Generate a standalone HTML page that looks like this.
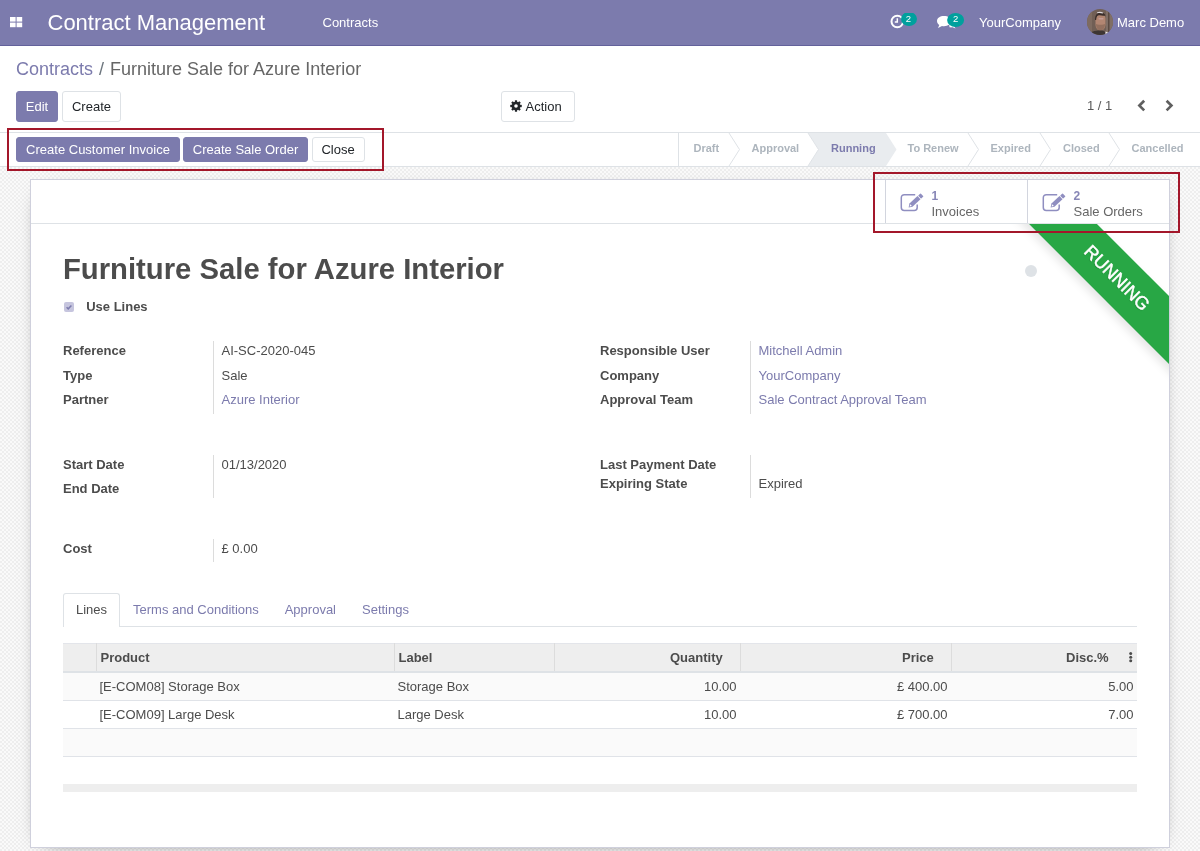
<!DOCTYPE html>
<html><head><meta charset="utf-8">
<style>
*{box-sizing:border-box;margin:0;padding:0}
html,body{width:1200px;height:851px;overflow:hidden;background:#fff;}
body{position:relative;will-change:transform;font-family:"Liberation Sans",sans-serif;font-size:13px;color:#4c4c4c}
.a{position:absolute;white-space:nowrap;line-height:normal}
.nav{position:absolute;left:0;top:0;width:1200px;height:46px;background:#7c7bad;border-bottom:1px solid #63619b}
.w{color:#fff}
.btn{position:absolute;border:1px solid #7c7bad;background:#7c7bad;color:#fff;border-radius:3px;text-align:center;white-space:nowrap}
.btn2{position:absolute;border:1px solid #dee2e6;background:#fff;color:#212529;border-radius:3px;text-align:center;white-space:nowrap}
.sbg{position:absolute;left:0;top:167px;width:1200px;height:684px;background-color:#fafafa;
background-image:linear-gradient(45deg,#eeeeee 25%,transparent 25%,transparent 75%,#eeeeee 75%),linear-gradient(45deg,#eeeeee 25%,transparent 25%,transparent 75%,#eeeeee 75%);
background-size:4px 4px;background-position:0 0,2px 2px}
.sheet{position:absolute;left:30px;top:179px;width:1140px;height:669px;background:#fff;border:1px solid #cfd0dc;box-shadow:0 5px 20px -15px #000}
.lbl{font-weight:bold;color:#4c4c4c}
.lnk{color:#7c7bad}
.vl{position:absolute;width:1px;background:#dcdcdc}
.st{position:absolute;font-size:11px;font-weight:bold;color:#adb5bd;white-space:nowrap;line-height:normal}
.red{position:absolute;border:2px solid #a3172a}
.hdr{position:absolute;top:643px;height:30px;background:#eeeeee;border-top:1px solid #e3e5ea;border-bottom:2px solid #dee2e6}
</style></head>
<body>
<!-- NAVBAR -->
<div class="nav"></div>
<svg class="a" style="left:10px;top:17px" width="13" height="11" viewBox="0 0 13 11">
<rect x="0" y="0" width="5.6" height="4.6" fill="#fff"/><rect x="6.6" y="0" width="5.6" height="4.6" fill="#fff"/>
<rect x="0" y="5.6" width="5.6" height="4.6" fill="#fff"/><rect x="6.6" y="5.6" width="5.6" height="4.6" fill="#fff"/>
</svg>
<div class="a w" style="left:47.5px;top:10px;font-size:22px">Contract Management</div>
<div class="a w" style="left:322.5px;top:15px">Contracts</div>
<!-- clock icon -->
<svg class="a" style="left:889px;top:13px" width="30" height="18" viewBox="0 0 30 18">
<circle cx="8.3" cy="8.5" r="5.8" fill="none" stroke="#fff" stroke-width="2"/>
<path d="M8.3 5.3V9H5.8" fill="none" stroke="#fff" stroke-width="1.5"/>
<ellipse cx="20" cy="6" rx="8" ry="7" fill="#00a09d"/>
<text x="19.5" y="8.7" font-size="9.5" fill="#fff" text-anchor="middle" font-family="Liberation Sans">2</text>
</svg>
<!-- chat icon -->
<svg class="a" style="left:935px;top:12px" width="32" height="18" viewBox="0 0 32 18">
<path d="M9 4C5 4 2 6 2 9c0 1.6.9 3 2.3 4L3 16l4-2c.6.1 1.3.2 2 .2 4 0 7-2.3 7-5.2S13 4 9 4z" fill="#fff"/>
<path d="M14 11c2.5.5 4.5 1.5 5 3l1.5 2.5-3-1.2c-1 .2-2 .2-3 0z" fill="#fff"/>
<ellipse cx="20.6" cy="8" rx="8.5" ry="7" fill="#00a09d"/>
<text x="20.6" y="10" font-size="9.5" fill="#fff" text-anchor="middle" font-family="Liberation Sans">2</text>
</svg>
<div class="a w" style="left:979px;top:15px">YourCompany</div>
<!-- avatar -->
<svg class="a" style="left:1087px;top:9px" width="26" height="26" viewBox="0 0 26 26">
<defs><clipPath id="av"><circle cx="13" cy="13" r="13"/></clipPath><filter id="avb" x="-20%" y="-20%" width="140%" height="140%"><feGaussianBlur stdDeviation="0.35"/></filter></defs>
<g clip-path="url(#av)">
<rect width="26" height="26" fill="#715f55"/>
<rect x="0" y="0" width="5" height="26" fill="#7e6b60"/>
<rect x="19" y="0" width="7" height="26" fill="#806f66"/>
<rect x="21" y="3" width="1.5" height="20" fill="#5a4a42"/>
<g filter="url(#avb)">
<path d="M8.5 10c0-3.5 2.2-5.5 5-5.5s5 2 5 5.5v5c0 4.5-2.5 6.5-5 6.5s-5-2-5-6.5z" fill="#b28672"/>
<path d="M9 15c1 .5 2 .8 4.5.8s3.5-.3 4.5-.8c0 4-2 6.5-4.5 6.5S9 19 9 15z" fill="#93705e"/>
<path d="M11.5 9.5h5l-.3.8h-4.4z" fill="#d4b0b8"/>
<path d="M8 11c-.3-4.5 2-7.5 5.5-7.5 2.5 0 4.3 1.3 5 3-1.8.3-3.8.2-5.8-.2-2-.3-3.2.8-3.6 4.7z" fill="#3a2e2a"/>
<path d="M10 3.3c1.8-.9 4.5-.8 6.3.4l-.5.9c-1.8-.7-3.6-.8-5.4-.3z" fill="#dcd8dc"/>
<path d="M2 26c1.5-3.5 5.5-4.5 11-4.5 2.5 0 4.5.5 5.5 2V26z" fill="#3c3430"/>
<path d="M18.5 22.5l2.5 1 .4 2.5h-3z" fill="#e8e6e8"/>
</g>
</g>
</svg>
<div class="a w" style="left:1117px;top:15px">Marc Demo</div>

<!-- CONTROL PANEL -->
<div class="a" style="left:16px;top:59px;font-size:18px;color:#6c757d"><span style="color:#7c7bad">Contracts</span><span style="padding:0 6px">/</span><span style="color:#666">Furniture Sale for Azure Interior</span></div>
<div class="btn" style="left:16px;top:91px;width:42px;height:31px;line-height:29px">Edit</div>
<div class="btn2" style="left:62px;top:91px;width:59px;height:31px;line-height:29px">Create</div>
<div class="btn2" style="left:501px;top:91px;width:74px;height:31px;line-height:29px;text-align:left;padding-left:23.5px">Action</div>
<svg class="a" style="left:510px;top:100.2px" width="12" height="12" viewBox="0 0 12 12">
<g transform="translate(6 6)" fill="#212529">
<circle r="4.3"/>
<rect x="-1.15" y="-5.75" width="2.3" height="11.5" rx=".4"/>
<rect x="-1.15" y="-5.75" width="2.3" height="11.5" rx=".4" transform="rotate(45)"/>
<rect x="-1.15" y="-5.75" width="2.3" height="11.5" rx=".4" transform="rotate(90)"/>
<rect x="-1.15" y="-5.75" width="2.3" height="11.5" rx=".4" transform="rotate(135)"/>
<circle r="1.8" fill="#fff"/>
</g>
</svg>
<div class="a" style="left:1087px;top:98px;color:#5a5a5a">1 / 1</div>
<svg class="a" style="left:1136px;top:99px" width="40" height="14" viewBox="0 0 40 14">
<path d="M8.2 1.8L3.4 6.6 8.2 11.4" fill="none" stroke="#5f5f5f" stroke-width="2.7"/>
<path d="M30.6 1.8L35.4 6.6 30.6 11.4" fill="none" stroke="#5f5f5f" stroke-width="2.7"/>
</svg>

<!-- STATUSBAR -->
<div class="a" style="left:0;top:132px;width:1200px;height:35px;border-top:1px solid #dee2e6;border-bottom:1px solid #dee2e6;background:#fff"></div>
<div class="btn" style="left:16px;top:137px;width:164px;height:25px;line-height:23px">Create Customer Invoice</div>
<div class="btn" style="left:183px;top:137px;width:125px;height:25px;line-height:23px">Create Sale Order</div>
<div class="btn2" style="left:311.5px;top:137px;width:53px;height:25px;line-height:23px">Close</div>
<svg class="a" style="left:0;top:133px" width="1200" height="33" viewBox="0 0 1200 33">
<path d="M808 0H886L896.5 16.5 886 33H808L818.5 16.5z" fill="#e9ecef"/>
<path d="M678.5 0V33" stroke="#dee2e6" stroke-width="1"/>
<path d="M729 0L739.5 16.5 729 33" fill="none" stroke="#dee2e6" stroke-width="1"/>
<path d="M808 0L818.5 16.5 808 33" fill="#fff" stroke="#dee2e6" stroke-width="1"/>
<path d="M968 0L978.5 16.5 968 33" fill="none" stroke="#dee2e6" stroke-width="1"/>
<path d="M1040 0L1050.5 16.5 1040 33" fill="none" stroke="#dee2e6" stroke-width="1"/>
<path d="M1109 0L1119.5 16.5 1109 33" fill="none" stroke="#dee2e6" stroke-width="1"/>
</svg>
<div class="st" style="left:693.5px;top:142px">Draft</div>
<div class="st" style="left:751.5px;top:142px">Approval</div>
<div class="st" style="left:831px;top:142px;color:#7c7bad">Running</div>
<div class="st" style="left:907.5px;top:142px">To Renew</div>
<div class="st" style="left:990.5px;top:142px">Expired</div>
<div class="st" style="left:1063px;top:142px">Closed</div>
<div class="st" style="left:1131.5px;top:142px">Cancelled</div>

<!-- SHEET BG -->
<div class="sbg"></div>
<div class="sheet"></div>

<!-- SHEET CONTENT -->
<div class="a" style="left:31px;top:180px;width:1138px;height:44px;background:#fff;border-bottom:1px solid #dee2e6;z-index:2"></div>
<div class="vl" style="left:885px;top:180px;height:43px;z-index:3;background:#d2d5de"></div>
<div class="vl" style="left:1027px;top:180px;height:43px;z-index:3;background:#d2d5de"></div>
<svg class="a" style="left:900px;top:193px;z-index:3;overflow:visible" width="24" height="19" viewBox="0 0 24 19">
<path d="M15.2 1.7H4.3C2.5 1.7 1.3 2.9 1.3 4.7v9.8c0 1.8 1.2 3 3 3h9.9c1.8 0 3-1.2 3-3v-3" fill="none" stroke="#8f8ec0" stroke-width="1.5"/>
<g transform="translate(8.6 14.4) rotate(-43)"><path d="M0 0L3.2-2.2H14.2V2.2H3.2z" fill="#8f8ec0"/><rect x="15" y="-2.2" width="3.4" height="4.4" rx=".6" fill="#8f8ec0"/><path d="M1.2 0L3.4-1.1V1.1z" fill="#fff"/></g>
</svg>
<div class="a" style="left:931.5px;top:189px;font-size:12px;font-weight:bold;color:#8786b6;z-index:3">1</div>
<div class="a" style="left:931.5px;top:204px;color:#666;z-index:3">Invoices</div>
<svg class="a" style="left:1042px;top:193px;z-index:3;overflow:visible" width="24" height="19" viewBox="0 0 24 19">
<path d="M15.2 1.7H4.3C2.5 1.7 1.3 2.9 1.3 4.7v9.8c0 1.8 1.2 3 3 3h9.9c1.8 0 3-1.2 3-3v-3" fill="none" stroke="#8f8ec0" stroke-width="1.5"/>
<g transform="translate(8.6 14.4) rotate(-43)"><path d="M0 0L3.2-2.2H14.2V2.2H3.2z" fill="#8f8ec0"/><rect x="15" y="-2.2" width="3.4" height="4.4" rx=".6" fill="#8f8ec0"/><path d="M1.2 0L3.4-1.1V1.1z" fill="#fff"/></g>
</svg>
<div class="a" style="left:1073.5px;top:189px;font-size:12px;font-weight:bold;color:#8786b6;z-index:3">2</div>
<div class="a" style="left:1073.5px;top:204px;color:#666;z-index:3">Sale Orders</div>

<!-- ribbon -->
<div class="a" style="left:969px;top:224px;width:200px;height:175px;overflow:hidden;z-index:1">
<div style="position:absolute;left:-2px;top:29.85px;width:300px;height:48px;padding:15px 0;background:#28a745;color:#fff;font-size:18px;-webkit-text-stroke:0.45px #fff;line-height:18px;text-align:center;transform:rotate(45deg);box-shadow:0 5px 10px rgba(0,0,0,.1);text-shadow:0 1px 1px rgba(0,0,0,.2)">RUNNING</div>
</div>
<div class="a" style="left:1025px;top:265px;width:12px;height:12px;border-radius:50%;background:#dee2e6"></div>

<div class="a" style="left:63px;top:253px;font-size:29.25px;font-weight:bold;color:#4c4c4c">Furniture Sale for Azure Interior</div>
<div class="a" style="left:64px;top:302px;width:10px;height:10px;border-radius:2px;background:#c6c5de"></div>
<svg class="a" style="left:64px;top:302px" width="10" height="10" viewBox="0 0 10 10"><path d="M2.6 5.2l1.6 1.6 3.2-3.4" fill="none" stroke="#7c7bad" stroke-width="1.5"/></svg>
<div class="a lbl" style="left:86.2px;top:299px">Use Lines</div>

<div class="a lbl" style="left:63px;top:343px">Reference</div>
<div class="a lbl" style="left:63px;top:368px">Type</div>
<div class="a lbl" style="left:63px;top:392px">Partner</div>
<div class="vl" style="left:213px;top:341px;height:73px"></div>
<div class="a" style="left:221.5px;top:343px">AI-SC-2020-045</div>
<div class="a" style="left:221.5px;top:368px">Sale</div>
<div class="a lnk" style="left:221.5px;top:392px">Azure Interior</div>

<div class="a lbl" style="left:600px;top:343px">Responsible User</div>
<div class="a lbl" style="left:600px;top:368px">Company</div>
<div class="a lbl" style="left:600px;top:392px">Approval Team</div>
<div class="vl" style="left:750px;top:341px;height:73px"></div>
<div class="a lnk" style="left:758.5px;top:343px">Mitchell Admin</div>
<div class="a lnk" style="left:758.5px;top:368px">YourCompany</div>
<div class="a lnk" style="left:758.5px;top:392px">Sale Contract Approval Team</div>

<div class="a lbl" style="left:63px;top:457px">Start Date</div>
<div class="a lbl" style="left:63px;top:481px">End Date</div>
<div class="vl" style="left:213px;top:455px;height:43px"></div>
<div class="a" style="left:221.5px;top:457px">01/13/2020</div>

<div class="a lbl" style="left:600px;top:457px">Last Payment Date</div>
<div class="a lbl" style="left:600px;top:476px">Expiring State</div>
<div class="vl" style="left:750px;top:455px;height:43px"></div>
<div class="a" style="left:758.5px;top:476px">Expired</div>

<div class="a lbl" style="left:63px;top:541px">Cost</div>
<div class="vl" style="left:213px;top:539px;height:23px"></div>
<div class="a" style="left:221.5px;top:541px">£ 0.00</div>

<!-- tabs -->
<div class="a" style="left:63px;top:626px;width:1074px;height:1px;background:#dee2e6"></div>
<div class="a" style="left:63px;top:593px;width:57px;height:34px;background:#fff;border:1px solid #dee2e6;border-bottom:none;border-radius:3px 3px 0 0"></div>
<div class="a" style="left:76px;top:602px">Lines</div>
<div class="a lnk" style="left:133px;top:602px">Terms and Conditions</div>
<div class="a lnk" style="left:284.7px;top:602px">Approval</div>
<div class="a lnk" style="left:362px;top:602px">Settings</div>

<!-- table -->
<div class="hdr" style="left:63px;width:1074px"></div>
<div class="vl" style="left:96px;top:643px;height:28px;background:#dcdcdc"></div>
<div class="vl" style="left:394px;top:643px;height:28px;background:#dcdcdc"></div>
<div class="vl" style="left:554px;top:643px;height:28px;background:#dcdcdc"></div>
<div class="vl" style="left:740px;top:643px;height:28px;background:#dcdcdc"></div>
<div class="vl" style="left:951px;top:643px;height:28px;background:#dcdcdc"></div>
<div class="a lbl" style="left:100.5px;top:650px">Product</div>
<div class="a lbl" style="left:398.5px;top:650px">Label</div>
<div class="a lbl" style="left:670px;top:650px">Quantity</div>
<div class="a lbl" style="left:902px;top:650px">Price</div>
<div class="a lbl" style="left:1066px;top:650px">Disc.%</div>
<svg class="a" style="left:1128px;top:651px" width="5" height="12" viewBox="0 0 5 12"><circle cx="2.7" cy="2.6" r="1.5" fill="#4c4c4c"/><circle cx="2.7" cy="6.2" r="1.5" fill="#4c4c4c"/><circle cx="2.7" cy="9.8" r="1.5" fill="#4c4c4c"/></svg>

<div class="a" style="left:63px;top:673px;width:1074px;height:28px;background:#fafafa;border-bottom:1px solid #e0e3e8"></div>
<div class="a" style="left:63px;top:701px;width:1074px;height:28px;background:#fff;border-bottom:1px solid #e0e3e8"></div>
<div class="a" style="left:63px;top:729px;width:1074px;height:28px;background:#fafafa;border-bottom:1px solid #e0e3e8"></div>
<div class="a" style="left:63px;top:757px;width:1074px;height:27px;background:#fff"></div>
<div class="a" style="left:63px;top:784px;width:1074px;height:8px;background:#eeeeee"></div>

<div class="a" style="left:99.5px;top:679px">[E-COM08] Storage Box</div>
<div class="a" style="left:397.5px;top:679px">Storage Box</div>
<div class="a" style="left:736.5px;top:679px;transform:translateX(-100%)">10.00</div>
<div class="a" style="left:947.5px;top:679px;transform:translateX(-100%)">£ 400.00</div>
<div class="a" style="left:1133.5px;top:679px;transform:translateX(-100%)">5.00</div>
<div class="a" style="left:99.5px;top:707px">[E-COM09] Large Desk</div>
<div class="a" style="left:397.5px;top:707px">Large Desk</div>
<div class="a" style="left:736.5px;top:707px;transform:translateX(-100%)">10.00</div>
<div class="a" style="left:947.5px;top:707px;transform:translateX(-100%)">£ 700.00</div>
<div class="a" style="left:1133.5px;top:707px;transform:translateX(-100%)">7.00</div>

<!-- annotations -->
<div class="red" style="left:7px;top:128px;width:377px;height:43px;z-index:5"></div>
<div class="red" style="left:873px;top:172px;width:307px;height:61px;z-index:5"></div>
</body></html>
